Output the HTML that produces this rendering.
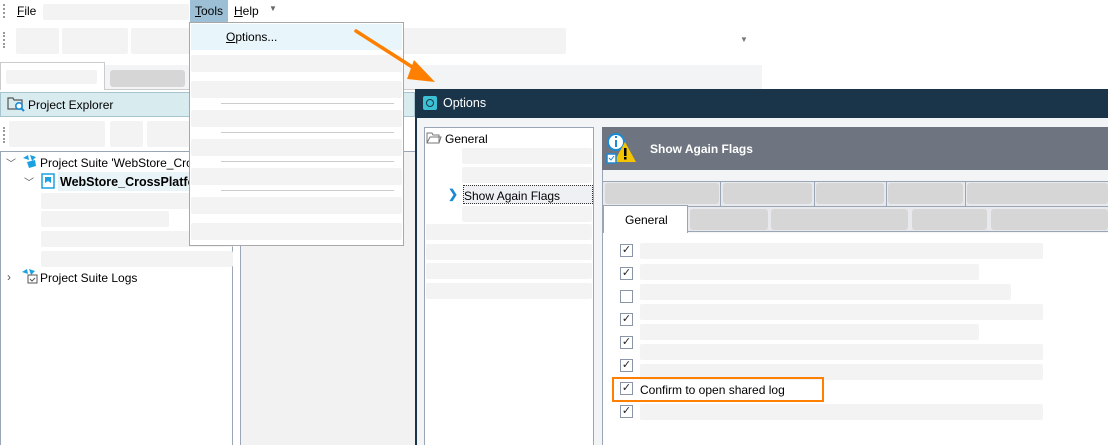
<!DOCTYPE html>
<html><head><meta charset="utf-8"><style>
*{margin:0;padding:0;box-sizing:border-box}
body{width:1108px;height:445px;position:relative;overflow:hidden;background:#fff;font-family:"Liberation Sans",sans-serif;font-size:12px;color:#000}
.a{position:absolute}
.g{position:absolute;background:#f3f3f3;border-radius:2px}
.d{position:absolute;background:#d6d6d6;border-radius:3px}
.cb{position:absolute;width:13px;height:13px;border:1px solid #8a96a8;background:#fff;font-size:11px;line-height:11px;text-align:center;color:#222}
.t{position:absolute;white-space:nowrap}
</style></head><body>
<!-- menu bar -->
<div class="a" style="left:3px;top:4px;width:2px;height:14px;border-left:2px dotted #999"></div>
<div class="t" style="left:17px;top:4px"><u>F</u>ile</div>
<div class="g" style="left:43px;top:4px;width:146px;height:16px"></div>
<div class="a" style="left:190px;top:0;width:38px;height:22px;background:#9dbfd5"></div>
<div class="t" style="left:195px;top:4px"><u>T</u>ools</div>
<div class="t" style="left:234px;top:4px"><u>H</u>elp</div>
<div class="t" style="left:269px;top:4px;font-size:8px;color:#666">▼</div>
<!-- toolbar -->
<div class="a" style="left:3px;top:32px;height:16px;border-left:2px dotted #999"></div>
<div class="g" style="left:16px;top:28px;width:43px;height:26px"></div>
<div class="g" style="left:62px;top:28px;width:66px;height:26px"></div>
<div class="g" style="left:131px;top:28px;width:435px;height:26px"></div>
<div class="t" style="left:740px;top:35px;font-size:8px;color:#777">▼</div>
<!-- tabs -->
<div class="a" style="left:0;top:89px;width:762px;height:1px;background:#ccc"></div>
<div class="a" style="left:0;top:62px;width:105px;height:28px;background:#fff;border:1px solid #ccc;border-bottom:none"></div>
<div class="g" style="left:6px;top:70px;width:91px;height:14px"></div>
<div class="a" style="left:105px;top:65px;width:657px;height:24px;background:#f3f4f6"></div>
<div class="d" style="left:110px;top:70px;width:75px;height:17px"></div>
<!-- project explorer header -->
<div class="a" style="left:0;top:92px;width:415px;height:25px;background:#d8ecf0;border:1px solid #a8c4cf"></div>
<svg class="a" style="left:7px;top:95px" width="18" height="18" viewBox="0 0 18 18"><path d="M1 3h5l1 2h8v9H1z" fill="none" stroke="#555" stroke-width="1.2"/><circle cx="12" cy="11" r="3.2" fill="#fff" stroke="#1a8ad4" stroke-width="1.6"/><path d="M14 13l3 3" stroke="#1a8ad4" stroke-width="2"/></svg>
<div class="t" style="left:28px;top:98px">Project Explorer</div>
<!-- explorer toolbar -->
<div class="a" style="left:3px;top:127px;height:16px;border-left:2px dotted #999"></div>
<div class="g" style="left:9px;top:121px;width:96px;height:26px"></div>
<div class="g" style="left:110px;top:121px;width:33px;height:26px"></div>
<div class="g" style="left:147px;top:121px;width:45px;height:26px"></div>
<div class="a" style="left:0;top:151px;width:233px;height:294px;border-top:1px solid #9aa6b6;border-left:1px solid #9aa6b6;border-right:1px solid #9aa6b6"></div>
<div class="a" style="left:240px;top:151px;width:175px;height:294px;background:#f2f2f2;border-left:1px solid #9aa6b6;border-top:1px solid #9aa6b6"></div>
<!-- tree -->
<div class="t" style="left:6px;top:155px;font-size:10px;color:#555">﹀</div>
<svg class="a" style="left:22px;top:154px" width="16" height="15" viewBox="0 0 16 15"><path d="M1 4l5-3 1 5z M8 1l6 2-4 4z M5 8l8-2 1 6-7 2z" fill="#1ba1e2"/></svg>
<div class="t" style="left:40px;top:156px">Project Suite 'WebStore_Crossl</div>
<div class="t" style="left:24px;top:174px;font-size:10px;color:#555">﹀</div>
<div class="a" style="left:58px;top:172px;width:175px;height:19px;background:#e8f4f8"></div>
<svg class="a" style="left:41px;top:172px" width="14" height="17" viewBox="0 0 14 17"><rect x="1" y="2" width="12" height="14" fill="#fff" stroke="#1ba1e2" stroke-width="1.5"/><path d="M4 5h6v6l-3-2-3 2z" fill="#1ba1e2"/></svg>
<div class="t" style="left:60px;top:175px;font-weight:bold;font-size:12.5px">WebStore_CrossPlatfor</div>
<div class="g" style="left:41px;top:193px;width:192px;height:16px"></div>
<div class="g" style="left:41px;top:211px;width:128px;height:16px"></div>
<div class="g" style="left:41px;top:231px;width:192px;height:16px"></div>
<div class="g" style="left:41px;top:251px;width:192px;height:16px"></div>
<div class="t" style="left:7px;top:270px;color:#555">›</div>
<svg class="a" style="left:21px;top:268px" width="18" height="17" viewBox="0 0 18 17"><path d="M1 4l5-3 1 5z M8 1l6 2-4 4z" fill="#1ba1e2"/><rect x="7" y="7" width="9" height="8" fill="#fff" stroke="#555"/><path d="M9 11l2 2 3-3" stroke="#555" fill="none"/></svg>
<div class="t" style="left:40px;top:271px">Project Suite Logs</div>
<!-- dropdown -->
<div class="a" style="left:189px;top:22px;width:215px;height:224px;background:#fff;border:1px solid #a8a8a8"></div>
<div class="a" style="left:191px;top:24px;width:211px;height:26px;background:#e8f6fb"></div>
<div class="t" style="left:226px;top:30px"><u>O</u>ptions...</div>
<div class="g" style="left:191px;top:55px;width:211px;height:17px"></div>
<div class="g" style="left:191px;top:81px;width:211px;height:17px"></div>
<div class="a" style="left:221px;top:103px;width:173px;height:1px;background:#ccc"></div>
<div class="g" style="left:191px;top:110px;width:211px;height:17px"></div>
<div class="a" style="left:221px;top:132px;width:173px;height:1px;background:#ccc"></div>
<div class="g" style="left:191px;top:139px;width:211px;height:17px"></div>
<div class="a" style="left:221px;top:161px;width:173px;height:1px;background:#ccc"></div>
<div class="g" style="left:191px;top:168px;width:211px;height:17px"></div>
<div class="a" style="left:221px;top:190px;width:173px;height:1px;background:#ccc"></div>
<div class="g" style="left:191px;top:197px;width:211px;height:17px"></div>
<div class="g" style="left:191px;top:223px;width:211px;height:17px"></div>
<!-- dialog -->
<div class="a" style="left:415px;top:89px;width:693px;height:356px;background:#f3f4f6"></div>
<div class="a" style="left:415px;top:89px;width:693px;height:29px;background:#1a3549"></div>
<div class="a" style="left:415px;top:118px;width:2px;height:327px;background:#1a3549"></div>
<div class="a" style="left:423px;top:96px;width:14px;height:14px;background:#3cc1d4;border-radius:2px"></div>
<div class="a" style="left:426px;top:99px;width:8px;height:8px;border:1.5px solid #1a3549;border-radius:50%"></div>
<div class="t" style="left:443px;top:96px;color:#fff;font-size:12.5px">Options</div>
<div class="a" style="left:424px;top:127px;width:170px;height:318px;background:#fff;border:1px solid #9aa6b6;border-bottom:none"></div>
<svg class="a" style="left:426px;top:131px" width="16" height="13" viewBox="0 0 16 13"><path d="M1 2h5l1 2h6v8H1z M1 12l3-6h11l-2 6" fill="none" stroke="#777"/></svg>
<div class="t" style="left:445px;top:132px">General</div>
<div class="g" style="left:462px;top:148px;width:130px;height:16px"></div>
<div class="g" style="left:462px;top:167px;width:130px;height:16px"></div>
<div class="t" style="left:448px;top:187px;color:#1a8ad4;font-weight:bold">❯</div>
<div class="a" style="left:463px;top:185px;width:130px;height:19px;background:#eef0f3;border:1px dotted #333"></div>
<div class="t" style="left:464px;top:189px">Show Again Flags</div>
<div class="g" style="left:462px;top:206px;width:130px;height:16px"></div>
<div class="g" style="left:426px;top:224px;width:166px;height:16px"></div>
<div class="g" style="left:426px;top:244px;width:166px;height:16px"></div>
<div class="g" style="left:426px;top:263px;width:166px;height:16px"></div>
<div class="g" style="left:426px;top:283px;width:166px;height:16px"></div>
<!-- right panel -->
<div class="a" style="left:602px;top:127px;width:506px;height:318px;border-left:1px solid #9aa6b6"></div>
<div class="a" style="left:602px;top:127px;width:506px;height:43px;background:#6e7580"></div>
<svg class="a" style="left:605px;top:132px" width="34" height="34" viewBox="0 0 34 34"><circle cx="11" cy="10" r="8" fill="#fff" stroke="#1a8ad4" stroke-width="2"/><rect x="10" y="8" width="2" height="7" fill="#1a8ad4"/><rect x="10" y="4" width="2" height="2" fill="#1a8ad4"/><path d="M20 10l11 20H9z" fill="#f5c400"/><rect x="19" y="16" width="2.5" height="8" fill="#000"/><rect x="19" y="25" width="2.5" height="2.5" fill="#000"/><rect x="2" y="22" width="9" height="9" fill="#fff" stroke="#1a8ad4" stroke-width="1.5"/><path d="M4 26l2 2 3-4" stroke="#1a8ad4" fill="none"/></svg>
<div class="t" style="left:650px;top:142px;color:#fff;font-weight:bold">Show Again Flags</div>
<!-- tabs row1 -->
<div class="a" style="left:603px;top:181px;width:505px;height:26px;background:#e8e9ec;border-top:1px solid #9aa6b6"></div>
<div class="d" style="left:605px;top:183px;width:114px;height:21px"></div>
<div class="d" style="left:723px;top:183px;width:89px;height:21px"></div>
<div class="d" style="left:816px;top:183px;width:68px;height:21px"></div>
<div class="d" style="left:888px;top:183px;width:75px;height:21px"></div>
<div class="d" style="left:967px;top:183px;width:141px;height:21px"></div>
<div class="a" style="left:720px;top:181px;width:1px;height:26px;background:#9aa6b6"></div>
<div class="a" style="left:814px;top:181px;width:1px;height:26px;background:#9aa6b6"></div>
<div class="a" style="left:886px;top:181px;width:1px;height:26px;background:#9aa6b6"></div>
<div class="a" style="left:965px;top:181px;width:1px;height:26px;background:#9aa6b6"></div>
<!-- tabs row2 -->
<div class="a" style="left:603px;top:206px;width:505px;height:26px;background:#e8e9ec;border-top:1px solid #9aa6b6;border-bottom:1px solid #9aa6b6"></div>
<div class="a" style="left:603px;top:205px;width:85px;height:28px;background:#fff;border:1px solid #9aa6b6;border-bottom:none"></div>
<div class="t" style="left:625px;top:213px">General</div>
<div class="d" style="left:690px;top:209px;width:78px;height:21px"></div>
<div class="d" style="left:771px;top:209px;width:137px;height:21px"></div>
<div class="d" style="left:912px;top:209px;width:75px;height:21px"></div>
<div class="d" style="left:991px;top:209px;width:117px;height:21px"></div>
<div class="a" style="left:603px;top:233px;width:505px;height:212px;background:#fff"></div>
<!-- checkboxes -->
<div class="cb" style="left:620px;top:244px">✓</div><div class="g" style="left:640px;top:243px;width:403px;height:16px"></div>
<div class="cb" style="left:620px;top:267px">✓</div><div class="g" style="left:640px;top:264px;width:339px;height:16px"></div>
<div class="cb" style="left:620px;top:290px"></div><div class="g" style="left:640px;top:284px;width:371px;height:16px"></div>
<div class="g" style="left:640px;top:304px;width:403px;height:16px"></div>
<div class="cb" style="left:620px;top:313px">✓</div>
<div class="g" style="left:640px;top:324px;width:339px;height:16px"></div>
<div class="cb" style="left:620px;top:336px">✓</div>
<div class="g" style="left:640px;top:344px;width:403px;height:16px"></div>
<div class="cb" style="left:620px;top:359px">✓</div>
<div class="g" style="left:640px;top:364px;width:403px;height:16px"></div>
<div class="a" style="left:612px;top:377px;width:212px;height:25px;border:2px solid #ff8000"></div>
<div class="cb" style="left:620px;top:382px">✓</div>
<div class="t" style="left:640px;top:383px">Confirm to open shared log</div>
<div class="cb" style="left:620px;top:405px">✓</div><div class="g" style="left:640px;top:404px;width:403px;height:16px"></div>
<!-- arrow -->
<svg class="a" style="left:340px;top:20px" width="100" height="70" viewBox="0 0 100 70"><path d="M16 11L80 52" stroke="#ff8000" stroke-width="3.5" stroke-linecap="round"/><path d="M74 40L95 62L67 59z" fill="#ff8000"/></svg>
</body></html>
